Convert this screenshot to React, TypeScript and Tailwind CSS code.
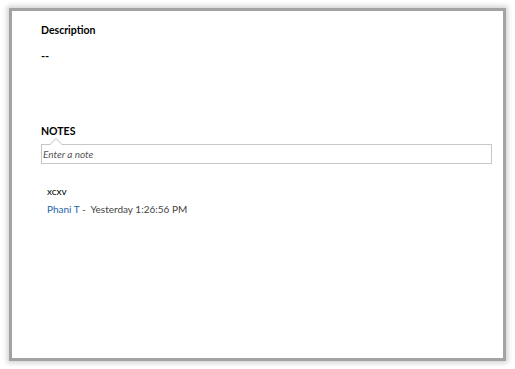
export default function App() {
  return (
    <div className="w-[515px] h-[369px] bg-white pt-[11px] pl-[12px] font-['Lato',sans-serif]">
      <div className="w-[491px] h-[347px] bg-white shadow-[0_0_0_3px_#a3a3a3,0_0_5px_5px_rgba(0,0,0,0.18)] pl-[29px] pr-[11px] pt-[12px] flex flex-col">
        <div className="text-[10.5px] font-bold text-black leading-[14px]">Description</div>
        <div className="mt-[12px] text-[11px] font-bold text-black leading-[14px]">--</div>
        <div className="mt-[61px] text-[10.5px] font-bold text-black leading-[14px]">NOTES</div>
        <div className="relative mt-[6px]">
          <input
            className="block w-full h-[20px] border border-[#c6c6c6] px-[1px] text-[10px] italic text-[#444] outline-none placeholder:text-[#555] bg-white font-['Lato',sans-serif]"
            placeholder="Enter a note"
          />
          {/* callout notch */}
          <div className="absolute left-[8px] top-[-6px] grid">
            <div className="col-start-1 row-start-1 w-0 h-0 border-x-[7px] border-b-[7px] border-x-transparent border-b-[#c0c0c0]" />
            <div className="col-start-1 row-start-1 ml-[1px] mt-[1px] w-0 h-0 border-x-[6px] border-b-[6px] border-x-transparent border-b-white" />
          </div>
        </div>
        <div className="flex flex-col gap-[5px] pl-[6px] mt-[21px] text-[10px] leading-[13px]">
          <div className="text-black">xcxv</div>
          <div className="text-[#444]">
            <span className="text-[#2563a8]">Phani&nbsp;T</span> -&nbsp; Yesterday 1:26:56 PM
          </div>
        </div>
      </div>
    </div>
  );
}
